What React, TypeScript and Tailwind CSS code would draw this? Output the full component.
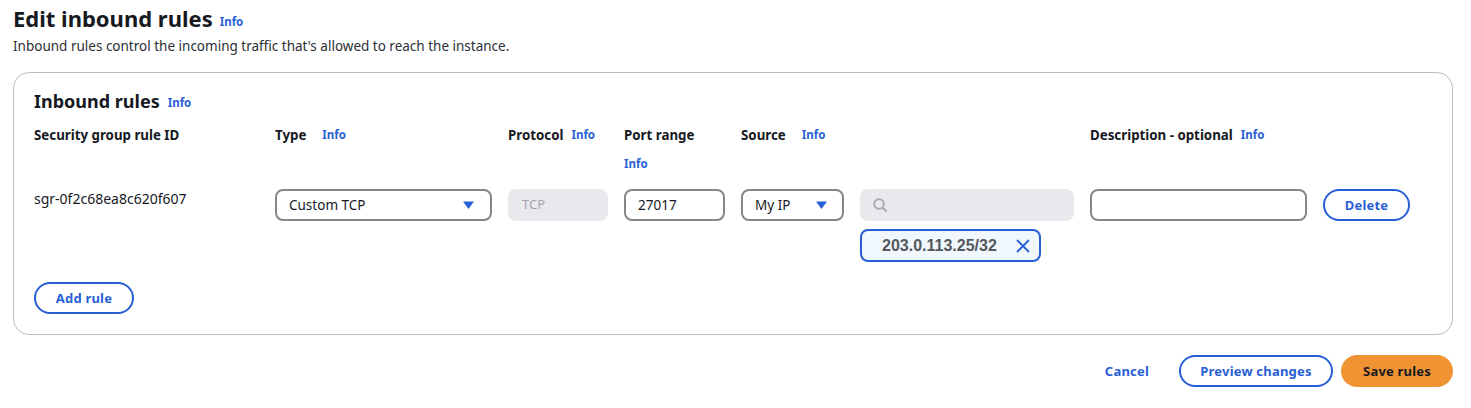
import React from "react";

function Info({ className = "" }: { className?: string }) {
  return <span className={`text-[11.5px] leading-[14px] font-bold text-[#295fd6] ${className}`}>Info</span>;
}

function Caret() {
  return (
    <svg width="11" height="8" viewBox="0 0 11 8" className="shrink-0">
      <path d="M0 0.5 H11 L5.5 8 Z" fill="#295fd6" />
    </svg>
  );
}

function Head({ label, children }: { label: string; children?: React.ReactNode }) {
  return (
    <div className="flex items-center text-[13.3px] leading-[16px] font-bold text-[#16191f] whitespace-nowrap">
      {label}
      {children}
    </div>
  );
}

function Pill({ children, className = "" }: { children: React.ReactNode; className?: string }) {
  return (
    <div className={`flex h-8 items-center justify-center rounded-2xl border-2 border-[#295fd6] bg-white pt-px text-[13px] font-bold tracking-[0.2px] text-[#295fd6] ${className}`}>
      {children}
    </div>
  );
}

export default function App() {
  return (
    <div className="h-[408px] w-[1471px] overflow-hidden bg-white pl-[13px] font-['Noto_Sans',sans-serif] text-[#16191f]">
      <div className="flex items-end pt-[4px]">
        <h1 className="text-[22px] leading-[28px] font-bold">Edit inbound rules</h1>
        <Info className="mb-[3px] ml-[7px]" />
      </div>
      <p className="mt-[5px] text-[13.5px] leading-[18px] text-[#2b2f36]">
        Inbound rules control the incoming traffic that's allowed to reach the instance.
      </p>
      <section className="mt-[17px] h-[263px] w-[1440px] rounded-2xl border border-[#bcbcc4] pt-[16px] pl-5">
        <div className="flex items-end">
          <h2 className="text-[18px] leading-[24px] font-bold">Inbound rules</h2>
          <Info className="mb-[3px] ml-[8px]" />
        </div>
        <div className="mt-[14px] grid grid-cols-[241px_233px_116px_117px_119px_230px_233px_87px]">
          <Head label="Security group rule ID" />
          <Head label="Type"><Info className="ml-4" /></Head>
          <Head label="Protocol"><Info className="ml-2" /></Head>
          <Head label="Port range" />
          <Head label="Source"><Info className="ml-4" /></Head>
          <div />
          <Head label="Description - optional"><Info className="ml-2" /></Head>
        </div>
        <div className="grid h-[37px] grid-cols-[241px_233px_116px_117px_119px_230px_233px_87px] items-end">
          <div className="col-start-4 pb-[9px]"><Info className="block" /></div>
        </div>
        <div className="mt-[9px] grid grid-cols-[241px_233px_116px_117px_119px_230px_233px_87px] text-[13.5px]">
          <div className="pt-[1px] text-[14px] leading-[18px] text-[#16191f]">sgr-0f2c68ea8c620f607</div>
          <div className="flex h-8 w-[217px] items-center justify-between rounded-lg border-2 border-[#85858d] pr-[16px] pl-[12px]">
            <span>Custom TCP</span>
            <Caret />
          </div>
          <div className="flex h-8 w-[100px] items-center rounded-lg bg-[#e9e9ed] pl-[14px] text-[13px] text-[#a5a5ad]">TCP</div>
          <div className="flex h-8 w-[101px] items-center rounded-lg border-2 border-[#85858d] pl-[12px]">27017</div>
          <div className="flex h-8 w-[103px] items-center justify-between rounded-lg border-2 border-[#85858d] pr-[15px] pl-[12px]">
            <span>My IP</span>
            <Caret />
          </div>
          <div>
            <div className="flex h-8 w-[214px] items-center rounded-lg bg-[#e9e9ed] pl-[12px]">
              <svg width="16" height="16" viewBox="0 0 16 16" fill="none" stroke="#a5a5ad" strokeWidth="1.8">
                <circle cx="7" cy="7" r="4.8" />
                <path d="M10.5 10.5 L14.5 14.5" />
              </svg>
            </div>
            <div className="mt-2 flex h-[33px] w-[181px] items-center rounded-lg border-2 border-[#295fd6] bg-[#f0f8fd] pl-5 font-['Liberation_Sans',sans-serif] text-[16px] font-bold text-[#55575c]">
              <span>203.0.113.25/32</span>
              <svg width="14" height="14" viewBox="0 0 14 14" className="ml-[19px]" fill="none" stroke="#295fd6" strokeWidth="1.8">
                <path d="M1 1 L13 13 M13 1 L1 13" />
              </svg>
            </div>
          </div>
          <div className="h-8 w-[217px] rounded-lg border-2 border-[#85858d]" />
          <Pill className="w-[87px]">Delete</Pill>
        </div>
        <Pill className="mt-[20px] w-[100px]">Add rule</Pill>
      </section>
      <div className="mt-5 flex w-[1440px] items-center justify-end">
        <span className="mr-[30px] pt-px text-[13px] font-bold tracking-[0.2px] text-[#295fd6]">Cancel</span>
        <Pill className="mr-2 w-[154px]">Preview changes</Pill>
        <div className="flex h-8 w-[112px] items-center justify-center rounded-2xl bg-[#f09433] pt-px text-[13px] font-bold tracking-[0.2px] text-[#16191f]">Save rules</div>
      </div>
    </div>
  );
}
